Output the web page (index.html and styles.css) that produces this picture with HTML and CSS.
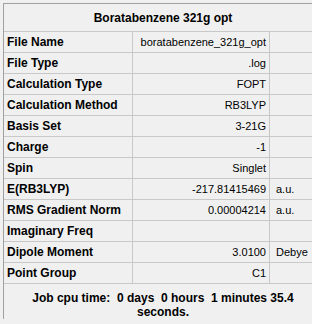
FILE: index.html
```html
<!DOCTYPE html>
<html lang="en">
<head>
  <meta charset="UTF-8">
  <title>Summary</title>
  <link rel="stylesheet" href="styles.css">
</head>
<body>

  <div class="panel">
    <div class="title">Boratabenzene 321g opt</div>

    <div class="row"><div class="key">File Name</div><div class="val">boratabenzene_321g_opt</div><div class="unit"></div></div>
    <div class="row"><div class="key">File Type</div><div class="val">.log</div><div class="unit"></div></div>
    <div class="row"><div class="key">Calculation Type</div><div class="val">FOPT</div><div class="unit"></div></div>
    <div class="row"><div class="key">Calculation Method</div><div class="val">RB3LYP</div><div class="unit"></div></div>
    <div class="row"><div class="key">Basis Set</div><div class="val">3-21G</div><div class="unit"></div></div>
    <div class="row"><div class="key">Charge</div><div class="val">-1</div><div class="unit"></div></div>
    <div class="row"><div class="key">Spin</div><div class="val">Singlet</div><div class="unit"></div></div>
    <div class="row"><div class="key">E(RB3LYP)</div><div class="val">-217.81415469</div><div class="unit">a.u.</div></div>
    <div class="row"><div class="key">RMS Gradient Norm</div><div class="val">0.00004214</div><div class="unit">a.u.</div></div>
    <div class="row"><div class="key">Imaginary Freq</div><div class="val"></div><div class="unit"></div></div>
    <div class="row"><div class="key">Dipole Moment</div><div class="val">3.0100</div><div class="unit">Debye</div></div>
    <div class="row"><div class="key">Point Group</div><div class="val">C1</div><div class="unit"></div></div>

    <div class="cpu">Job cpu time:  0 days  0 hours  1 minutes 35.4 seconds.</div>
  </div>

</body>
</html>
```

FILE: styles.css
```css
body {
  margin: 0;
  background: #f0f0f0;
  color: #000;
  font-family: "Liberation Sans", Arial, sans-serif;
  overflow: hidden;
}

.panel {
  margin: 3px 0 0 3px;
  width: 318px;
  border-top: 1px solid #a0a0a0;
  border-left: 1px solid #a0a0a0;
}

.title {
  box-sizing: border-box;
  height: 28px;
  border-bottom: 1px solid #c8c8c8;
  display: flex;
  align-items: center;
  justify-content: center;
  font-weight: bold;
  font-size: 12px;
}

.row {
  display: grid;
  grid-template-columns: 129px 137px 52px;
}

.row > div {
  box-sizing: border-box;
  height: 21px;
  border-bottom: 1px solid #c8c8c8;
  display: flex;
  align-items: center;
  white-space: nowrap;
}

.key {
  border-right: 1px solid #c8c8c8;
  padding-left: 3px;
  font-weight: bold;
  font-size: 12px;
}

.val {
  border-right: 1px solid #c8c8c8;
  justify-content: flex-end;
  padding-right: 3px;
  font-size: 11px;
}

.unit {
  padding-left: 6px;
  font-size: 11px;
}

.cpu {
  padding: 7px 4px 0;
  text-align: center;
  font-weight: bold;
  font-size: 12px;
  line-height: 14px;
  white-space: pre-wrap;
}
```
